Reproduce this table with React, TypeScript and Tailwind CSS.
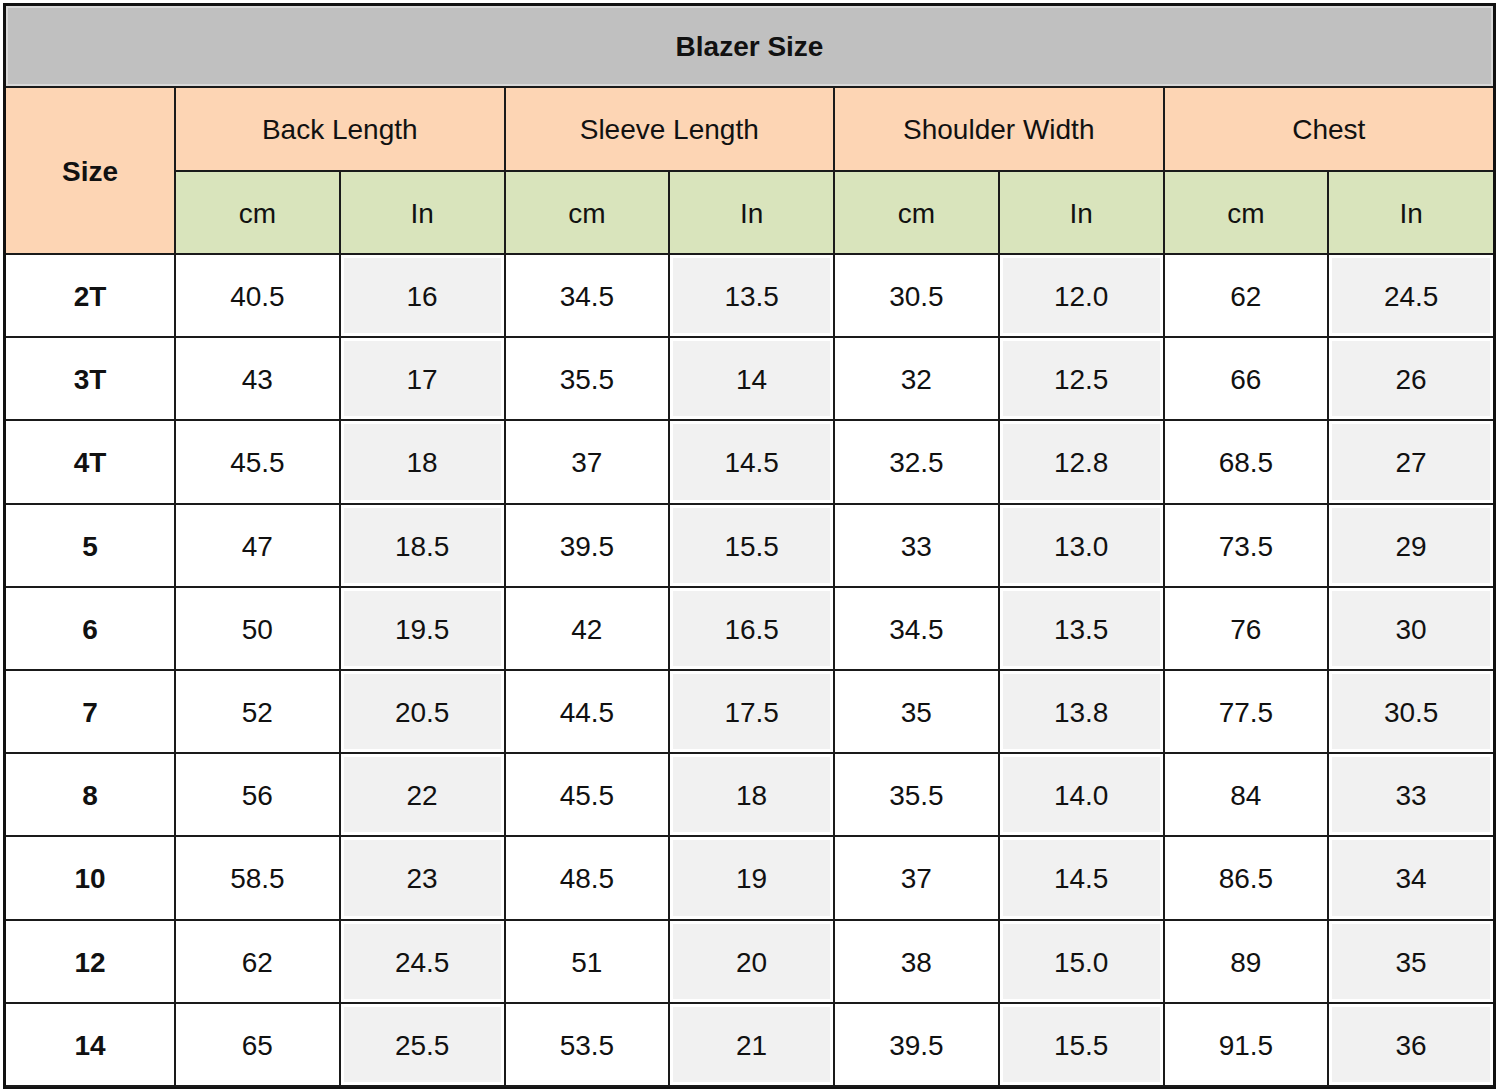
import React from 'react';

const rows: string[][] = [
  ['2T', '40.5', '16', '34.5', '13.5', '30.5', '12.0', '62', '24.5'],
  ['3T', '43', '17', '35.5', '14', '32', '12.5', '66', '26'],
  ['4T', '45.5', '18', '37', '14.5', '32.5', '12.8', '68.5', '27'],
  ['5', '47', '18.5', '39.5', '15.5', '33', '13.0', '73.5', '29'],
  ['6', '50', '19.5', '42', '16.5', '34.5', '13.5', '76', '30'],
  ['7', '52', '20.5', '44.5', '17.5', '35', '13.8', '77.5', '30.5'],
  ['8', '56', '22', '45.5', '18', '35.5', '14.0', '84', '33'],
  ['10', '58.5', '23', '48.5', '19', '37', '14.5', '86.5', '34'],
  ['12', '62', '24.5', '51', '20', '38', '15.0', '89', '35'],
  ['14', '65', '25.5', '53.5', '21', '39.5', '15.5', '91.5', '36'],
];

const groups = ['Back Length', 'Sleeve Length', 'Shoulder Width', 'Chest'];

export default function App() {
  return (
    <div className="w-[1500px] h-[1092px] bg-white pt-[3px] pl-[3px]" style={{ fontFamily: '"Liberation Sans", Arial, sans-serif' }}>
      <div className="w-[1493px] h-[1086px] border-[3px] border-[#111]">
        <table className="w-full h-full table-fixed border-collapse text-[28px] text-[#111] text-center">
          <colgroup>
            <col className="w-[169px]" />
            {Array.from({ length: 8 }).map((_, i) => (
              <col key={i} />
            ))}
          </colgroup>
          <thead>
            <tr className="h-[81px]">
              <th colSpan={9} className="bg-[#c0c0c0] font-bold pt-[2px] border-b-2 border-[#1a1a1a] shadow-[inset_0_0_0_2px_#d8d8d8]">
                Blazer Size
              </th>
            </tr>
            <tr className="h-[84px]">
              <th rowSpan={2} className="bg-[#fdd5b4] font-bold pt-[3px] border-2 border-l-0 border-[#1a1a1a]">
                Size
              </th>
              {groups.map((g) => (
                <th key={g} colSpan={2} className="bg-[#fdd5b4] font-normal pt-[2px] border-2 border-[#1a1a1a] last:border-r-0">
                  {g}
                </th>
              ))}
            </tr>
            <tr className="h-[83px]">
              {groups.map((g) => (
                <React.Fragment key={g}>
                  <th className="bg-[#d9e4bc] font-normal pt-[3px] border-2 border-[#1a1a1a]">cm</th>
                  <th className="bg-[#d9e4bc] font-normal pt-[3px] border-2 border-[#1a1a1a] last:border-r-0">In</th>
                </React.Fragment>
              ))}
            </tr>
          </thead>
          <tbody>
            {rows.map((r) => (
              <tr key={r[0]} className="h-[83.2px]">
                {r.map((v, i) => {
                  if (i === 0) {
                    return (
                      <td key={i} className="font-bold pt-[3px] border-2 border-l-0 border-[#1a1a1a]">
                        {v}
                      </td>
                    );
                  }
                  const isIn = i % 2 === 0;
                  return (
                    <td
                      key={i}
                      className={
                        isIn
                          ? 'bg-[#f1f1f1] pt-[3px] shadow-[inset_0_0_0_3px_#fff] border-2 border-[#1a1a1a] last:border-r-0'
                          : 'bg-white pt-[3px] border-2 border-[#1a1a1a]'
                      }
                    >
                      {v}
                    </td>
                  );
                })}
              </tr>
            ))}
          </tbody>
        </table>
      </div>
    </div>
  );
}
